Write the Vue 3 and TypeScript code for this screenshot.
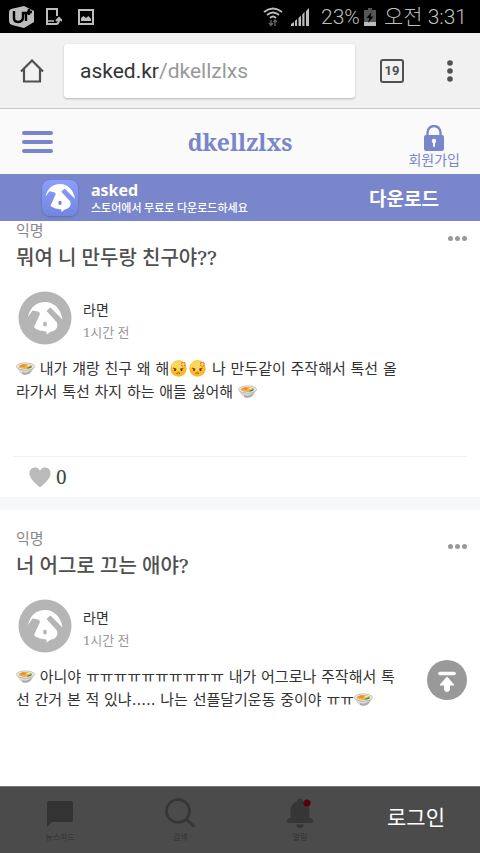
<script setup lang="ts">
import { ref } from 'vue'

type Part = { kind: 'text' | 'soup' | 'angry'; value: string }

interface Post {
  id: number
  asker: string
  question: string
  author: string
  time: string
  answer: Part[]
  likes?: number
}

const text = (value: string): Part => ({ kind: 'text', value })
const soup: Part = { kind: 'soup', value: '라면' }
const angry: Part = { kind: 'angry', value: '화남' }

// Mascot silhouette, shared by the app tile and the avatars
const mascot =
  'M10 26 C12 16 19 11 27 11 C36 11 43 18 44.500 28.500 L33 17 Q32 16.500 31 17.500 L28.500 20 L39 31.500 C40.500 37 37 40 33 40.500 L28.500 43.500 V40.500 C22 40 17 38 16 36 L22 23 Q21.500 20.500 20 20.500 L14.500 19.500 Z'

const posts = ref<Post[]>([
  {
    id: 1,
    asker: '익명',
    question: '뭐여 니 만두랑 친구야??',
    author: '라면',
    time: '1시간 전',
    answer: [
      soup,
      text(' 내가 걔랑 친구 왜 해'),
      angry,
      angry,
      text(' 나 만두같이 주작해서 톡선 올라가서 톡선 차지 하는 애들 싫어해 '),
      soup,
    ],
    likes: 0,
  },
  {
    id: 2,
    asker: '익명',
    question: '너 어그로 끄는 애야?',
    author: '라면',
    time: '1시간 전',
    answer: [
      soup,
      text(' 아니야 ㅠㅠㅠㅠㅠㅠㅠㅠㅠㅠ 내가 어그로나 주작해서 톡선 간거 본 적 있냐..... 나는 선플달기운동 중이야 ㅠㅠ'),
      soup,
    ],
  },
])
</script>

<template>
  <div class="screen">
    <div class="status">
      <div class="status-side">
        <svg class="i-carrier" viewBox="0 0 26 22" aria-hidden="true">
          <path d="M2 3 L15 0 L25 5 V16 L15 22 L3 19 Q0 18 0 14 V6 Q0 4 2 3Z" fill="#bdbdbd" />
          <path d="M5 5 V12 Q5 16 9 16 Q14 16 14 11 V7 H20 M17 15 V8 M20 3 V9 M18 6 H23" fill="none" stroke="#000" stroke-width="2.4" />
        </svg>
        <svg class="i-device" viewBox="0 0 16 18" aria-hidden="true">
          <path d="M11 8 V1 H1 V16 H8" fill="none" stroke="#bdbdbd" stroke-width="2" />
          <path d="M2 13 H8" stroke="#bdbdbd" stroke-width="1.5" />
          <path d="M8 16 H10 Q13 16 13 11 M10 13 L13 10 L16 13" fill="none" stroke="#bdbdbd" stroke-width="2" />
        </svg>
        <svg class="i-picture" viewBox="0 0 16 16" aria-hidden="true">
          <rect x="1" y="1" width="14" height="14" fill="none" stroke="#bdbdbd" stroke-width="2" />
          <path d="M3 12 V9 L5.500 7 L8 9 L10.500 7 L13 10 V12Z" fill="#bdbdbd" />
        </svg>
      </div>
      <div class="status-side status-right">
        <svg class="i-wifi" viewBox="0 0 20 20" aria-hidden="true">
          <g fill="none" stroke="#bdbdbd" stroke-width="1.800">
            <path d="M1 5 Q10 -2 19 5" />
            <path d="M4 8 Q10 3 16 8" />
            <path d="M7 11 Q10 8 13 11" />
          </g>
          <path d="M8 13 V18 M6 16 L8 18.500 L10 16 M12 19 V13 M10.500 15 L12 13 L14 15" fill="none" stroke="#666" stroke-width="1.300" />
        </svg>
        <svg class="i-signal" viewBox="0 0 18 18" aria-hidden="true">
          <path d="M0 18 V16 L3 14 V18Z M4 18 V13 L6 11 V18Z M7.500 18 V10 L10 7.500 V18Z M11.300 18 V6.500 L13.500 4 V18Z M15 18 V3 L18 0 V18Z" fill="#bdbdbd" />
        </svg>
        <span class="percent">23%</span>
        <svg class="i-battery" viewBox="0 0 12 18" aria-hidden="true">
          <path d="M4 0 H8 V2 H12 V18 H0 V2 H4Z" fill="#555" />
          <rect y="14" width="12" height="4" fill="#bdbdbd" />
          <path d="M7.500 4 L2.500 10 H5.500 L4 15 L9.500 8.500 H6.500Z" fill="#000" />
        </svg>
        <span class="clock">오전 3:31</span>
      </div>
    </div>

    <div class="browser">
      <button class="plain home" type="button" aria-label="홈">
        <svg viewBox="0 0 24 24"><path d="M1 12.500 L12 1.500 L23 12.500 M4 10 V22.500 H20 V10" fill="none" stroke="#505050" stroke-width="2.200" /></svg>
      </button>
      <button class="plain address" type="button">asked.kr<span>/dkellzlxs</span></button>
      <button class="plain tabs" type="button">19</button>
      <button class="plain kebab" type="button" aria-label="메뉴">
        <svg viewBox="0 0 6 22"><g fill="#505050"><circle cx="3" cy="3" r="2.800" /><circle cx="3" cy="11" r="2.800" /><circle cx="3" cy="19" r="2.800" /></g></svg>
      </button>
    </div>

    <header class="site">
      <button class="plain burger" type="button" aria-label="메뉴 열기"><i></i><i></i><i></i></button>
      <h1>dkellzlxs</h1>
      <a class="join" href="#join">
        <svg viewBox="0 0 20 26" aria-hidden="true">
          <path d="M3.500 11 V7.500 a6.500 6.500 0 0 1 13 0 V11" fill="none" stroke="#7986cb" stroke-width="2.400" />
          <rect y="10" width="20" height="16" rx="2" fill="#7986cb" />
          <circle cx="10" cy="16" r="2.200" fill="#fafafa" />
          <rect x="9" y="16" width="2" height="6" rx="1" fill="#fafafa" />
        </svg>
        <span>회원가입</span>
      </a>
    </header>

    <div class="banner">
      <svg class="app-icon" viewBox="0 0 36 36" aria-hidden="true">
        <defs><linearGradient id="tile" x1="0" y1="0" x2="0" y2="1"><stop offset="0" stop-color="#8c9eff" /><stop offset="1" stop-color="#7286dc" /></linearGradient></defs>
        <rect width="36" height="36" rx="8" fill="url(#tile)" />
        <g transform="translate(-5.2 -5.5) scale(0.86)">
          <path :d="mascot" fill="#fff" />
          <ellipse cx="27" cy="33" rx="1.900" ry="2.500" fill="#7286dc" />
        </g>
      </svg>
      <div class="banner-text">
        <strong>asked</strong>
        <span>스토어에서 무료로 다운로드하세요</span>
      </div>
      <a class="download" href="#download">다운로드</a>
    </div>

    <main class="feed">
      <div class="posts">
        <article v-for="post in posts" :key="post.id" class="post">
          <div class="question">
            <div class="question-text">
              <p>{{ post.asker }}</p>
              <h2>{{ post.question }}</h2>
            </div>
            <button class="plain more" type="button" aria-label="더보기"><i></i><i></i><i></i></button>
          </div>
          <div class="author">
            <svg class="avatar" viewBox="0 0 54 54" aria-hidden="true">
              <circle cx="27" cy="27" r="26.500" fill="#b5b5b5" />
              <path :d="mascot" fill="#fff" />
              <ellipse cx="27" cy="33" rx="1.900" ry="2.500" fill="#b5b5b5" />
            </svg>
            <div class="author-text">
              <strong>{{ post.author }}</strong>
              <time>{{ post.time }}</time>
            </div>
          </div>
          <p class="answer">
            <template v-for="(part, i) in post.answer" :key="i"><template v-if="part.kind === 'text'">{{ part.value }}</template><svg v-else-if="part.kind === 'soup'" class="emoji" viewBox="0 0 19 17" role="img" :aria-label="part.value">
                <path d="M1 6 Q2 12 6 14 Q9.500 15.500 13 14 Q17 12 18 6Z" fill="#d9d9d7" />
                <path d="M6 12 Q10 14 14 11 L16 9 Q15 13 12.500 14 Q9 15.300 6 14Z" fill="#aaa" />
                <ellipse cx="9.500" cy="6.500" rx="9" ry="3.600" fill="#f3f3f1" stroke="#999" stroke-width="0.600" />
                <ellipse cx="9.500" cy="6.500" rx="7" ry="2.500" fill="#e9b04b" />
                <path d="M4 6 Q7 3 10 5 L8 7Z" fill="#f28a22" />
                <path d="M10 6 L13 4.500 L14 6.500Z" fill="#fff0c0" />
                <path d="M11 8.500 Q13 6 16 6.800 Q15 8.800 11 8.500Z" fill="#2d9440" />
              </svg><svg v-else class="emoji" viewBox="0 0 19 17" role="img" :aria-label="part.value">
                <circle cx="9.500" cy="8.500" r="8.200" fill="#fbb829" />
                <ellipse cx="9" cy="6" rx="6.500" ry="4.800" fill="#ffd75a" />
                <path d="M4 8 L7.500 9.200 M14.500 8 L11 9.200" fill="none" stroke="#6b4210" stroke-width="1" />
                <path d="M7.500 13.500 Q9.300 12 11 13.500" fill="none" stroke="#8a5a1a" stroke-width="1" />
                <circle cx="6" cy="10" r="1" fill="#4c2d0a" />
                <circle cx="12.500" cy="10" r="1" fill="#4c2d0a" />
                <path d="M12 3.500 Q13.500 3.500 13.500 2 M15 2 Q15 3.500 16.500 3.500 M12 5 Q13.500 5 13.500 6.500 M15 6.500 Q15 5 16.500 5" fill="none" stroke="#cf6038" stroke-width="0.900" />
              </svg></template>
          </p>
          <div v-if="post.likes !== undefined" class="reactions">
            <button class="plain like" type="button" aria-label="좋아요">
              <svg viewBox="0 0 22 21"><path d="M11 4 C9.500 -0.500 3 -0.500 1 3.500 C-1 9 3 14 11 20.500 C19 14 23 9 21 3.500 C19 -0.500 12.500 -0.500 11 4Z" fill="#bababa" /></svg>
            </button>
            <span>{{ post.likes }}</span>
          </div>
        </article>
      </div>
    </main>

    <button class="plain to-top" type="button" aria-label="맨 위로">
      <svg viewBox="0 0 40 40"><circle cx="20" cy="20" r="20" fill="#999" /><path d="M13 13.500 H27" stroke="#fff" stroke-width="3.600" stroke-linecap="round" /><path d="M20 17 L27 25 H22.500 V29 Q22.500 31.500 20 31.500 Q17.500 31.500 17.500 29 V25 H13Z" fill="#fff" stroke="#fff" stroke-linejoin="round" /></svg>
    </button>

    <nav class="bottom">
      <a class="tab" href="#newsfeed">
        <svg viewBox="0 0 32 32" aria-hidden="true"><path d="M5 3 H27 Q29 3 29 5 V22 Q29 24 27 24 H8 L3 29 V5 Q3 3 5 3Z" fill="#333" /></svg>
        <span>뉴스피드</span>
      </a>
      <a class="tab" href="#search">
        <svg viewBox="0 0 32 32" aria-hidden="true"><circle cx="14" cy="13" r="11.500" fill="none" stroke="#363636" stroke-width="2.600" /><path d="M22 21 L30 28.500" stroke="#363636" stroke-width="3" /></svg>
        <span>검색</span>
      </a>
      <a class="tab" href="#alarm">
        <svg viewBox="0 0 32 32" aria-hidden="true">
          <path d="M6.500 20 V14 C6.500 8 9 4.500 13 3.500 C13 -0.500 19 -0.500 19 3.500 C23 4.500 25.500 8 25.500 14 V20 Q29 20 29 22.500 Q29 25 26.500 25 H5.500 Q3 25 3 22.500 Q3 20 6.500 20Z M12 26.500 H20 Q19 30 16 30 Q13 30 12 26.500Z" fill="#363636" />
          <circle cx="23" cy="5" r="3.600" fill="#560010" />
        </svg>
        <span>알림</span>
      </a>
      <a class="login" href="#login">로그인</a>
    </nav>
  </div>
</template>

<style>
body {
  margin: 0;
  background: #fff;
}
</style>

<style scoped>
.screen {
  --indigo: #7986cb;
  display: flex;
  flex-direction: column;
  height: 100vh;
  overflow: hidden;
  background: #fff;
  color: #333;
  font-family: "Noto Serif", "DejaVu Serif Condensed", "Noto Sans CJK KR", serif;
}
svg {
  display: block;
}
h1, h2, p {
  margin: 0;
}
a {
  color: inherit;
  text-decoration: none;
}
.plain {
  padding: 0;
  border: 0;
  background: none;
  color: inherit;
  font: inherit;
}
.status {
  flex: none;
  display: flex;
  justify-content: space-between;
  align-items: center;
  height: 33px;
  padding: 0 13px 0 9px;
  background: #000;
  color: #bdbdbd;
  font: 21px/32px Roboto, "Noto Sans CJK KR", sans-serif;
}
.status-side {
  display: flex;
  align-items: center;
}
.i-carrier { width: 26px; height: 22px; margin-right: 11px; }
.i-device { width: 16px; height: 18px; margin-right: 16px; }
.i-picture { width: 16px; height: 16px; }
.i-wifi { width: 20px; height: 20px; margin-right: 8px; }
.i-signal { width: 18px; height: 18px; margin-right: 12px; }
.i-battery { width: 12px; height: 18px; margin: 0 8px 0 4px; }
.percent,
.clock { font-weight: 300; }

.browser {
  flex: none;
  display: flex;
  align-items: center;
  box-sizing: border-box;
  height: 76px;
  padding: 0 27px 0 20px;
  border-bottom: 1px solid #c6c6c6;
  background: #f1f1f1;
}
.home svg { width: 24px; height: 24px; }
.address {
  flex: 1;
  height: 54px;
  margin: 0 25px 0 20px;
  padding: 0 16px;
  border-radius: 3px;
  background: #fff;
  box-shadow: 0 1px 2px #b5b5b5;
  color: #333;
  font: 21px/54px Roboto, sans-serif;
  text-align: left;
}
.address span { color: #999; }
.tabs {
  box-sizing: border-box;
  width: 24px;
  height: 24px;
  margin-right: 43px;
  border: 2px solid #505050;
  border-radius: 3px;
  color: #505050;
  font: bold 13px/20px Roboto, sans-serif;
}
.kebab svg { width: 6px; height: 22px; }

.site {
  flex: none;
  display: grid;
  grid-template-columns: 1fr auto 1fr;
  align-items: center;
  height: 65px;
  padding: 0 20px;
  background: #fafafa;
  color: var(--indigo);
}
.burger {
  display: grid;
  gap: 5px;
  width: 31px;
  margin-left: 2px;
}
.burger i {
  height: 4px;
  border-radius: 2px;
  background: var(--indigo);
}
.site h1 {
  font-size: 23px;
  line-height: 32px;
}
.join {
  justify-self: end;
  display: grid;
  justify-items: center;
  padding-top: 8px;
  font: 14px/16px "Noto Sans CJK KR", sans-serif;
}
.join svg { width: 20px; height: 26px; }

.banner {
  flex: none;
  display: flex;
  align-items: center;
  height: 47px;
  padding: 0 41px 0 42px;
  background: var(--indigo);
  color: #fff;
  font-family: "Noto Sans CJK KR", sans-serif;
}
.app-icon {
  width: 36px;
  height: 36px;
  border-radius: 8px;
  box-shadow: 0 1px 2px #5f6cae;
}
.banner-text {
  flex: 1;
  display: grid;
  margin-left: 13px;
}
.banner-text strong {
  font: bold 16px/18px "Noto Sans", sans-serif;
}
.banner-text span {
  font-size: 11px;
  font-weight: 500;
  line-height: 16px;
}
.download {
  font-size: 19px;
  font-weight: 700;
}

.feed {
  flex: 1;
  min-height: 0;
  overflow: hidden;
}
.posts {
  margin-top: -19px;
}
.post {
  padding-top: 18px;
  border-bottom: 13px solid #f7f8fa;
}
.post:last-child {
  border-bottom: 0;
}
.question {
  display: flex;
  justify-content: space-between;
  align-items: flex-start;
  padding: 0 13px 0 16px;
}
.question-text {
  display: grid;
  gap: 4px;
}
.question p {
  color: #888;
  font-size: 15px;
  line-height: 20px;
}
.question h2 {
  color: #505050;
  font-size: 20px;
  font-weight: 500;
  line-height: 28px;
}
.more {
  display: flex;
  gap: 2px;
  padding: 16px 0;
}
.more i {
  width: 5px;
  height: 5px;
  border-radius: 50%;
  background: #999;
}
.author {
  display: flex;
  align-items: center;
  gap: 11px;
  margin: 19px 18px 0;
}
.avatar {
  width: 54px;
  height: 54px;
}
.author-text {
  display: grid;
  padding-top: 6px;
}
.author strong {
  font-size: 14px;
  font-weight: 400;
  line-height: 22px;
}
.author time {
  color: #999;
  font-size: 13px;
  line-height: 22px;
}
.answer {
  min-height: 98px;
  margin: 13px 74px 0 16px;
  font-family: "DejaVu Serif", "Noto Sans CJK KR", serif;
  font-size: 15px;
  line-height: 23px;
}
.emoji {
  display: inline-block;
  width: 19px;
  height: 17px;
  vertical-align: -3px;
}
.reactions {
  display: flex;
  align-items: center;
  gap: 5px;
  height: 40px;
  margin: 0 13px;
  padding-left: 16px;
  border-top: 1px solid #f1f1f1;
  color: #444;
  font-size: 19px;
}
.like svg { width: 22px; height: 21px; }

.to-top {
  position: fixed;
  right: 13px;
  bottom: 153px;
}
.to-top svg { width: 40px; height: 40px; }

.bottom {
  flex: none;
  display: grid;
  grid-template-columns: repeat(4, 1fr);
  height: 66px;
  border-top: 1px solid #777;
  background: #4b4b4b;
  font-family: "Noto Sans CJK KR", sans-serif;
}
.tab {
  display: grid;
  justify-items: center;
  align-content: center;
  gap: 1px;
  color: #383838;
  font-size: 8px;
  font-weight: 500;
  line-height: 12px;
}
.tab svg { width: 32px; height: 32px; }
.login {
  display: grid;
  place-items: center;
  padding: 0 8px 8px 0;
  color: #fff;
  font-size: 21px;
}
</style>
